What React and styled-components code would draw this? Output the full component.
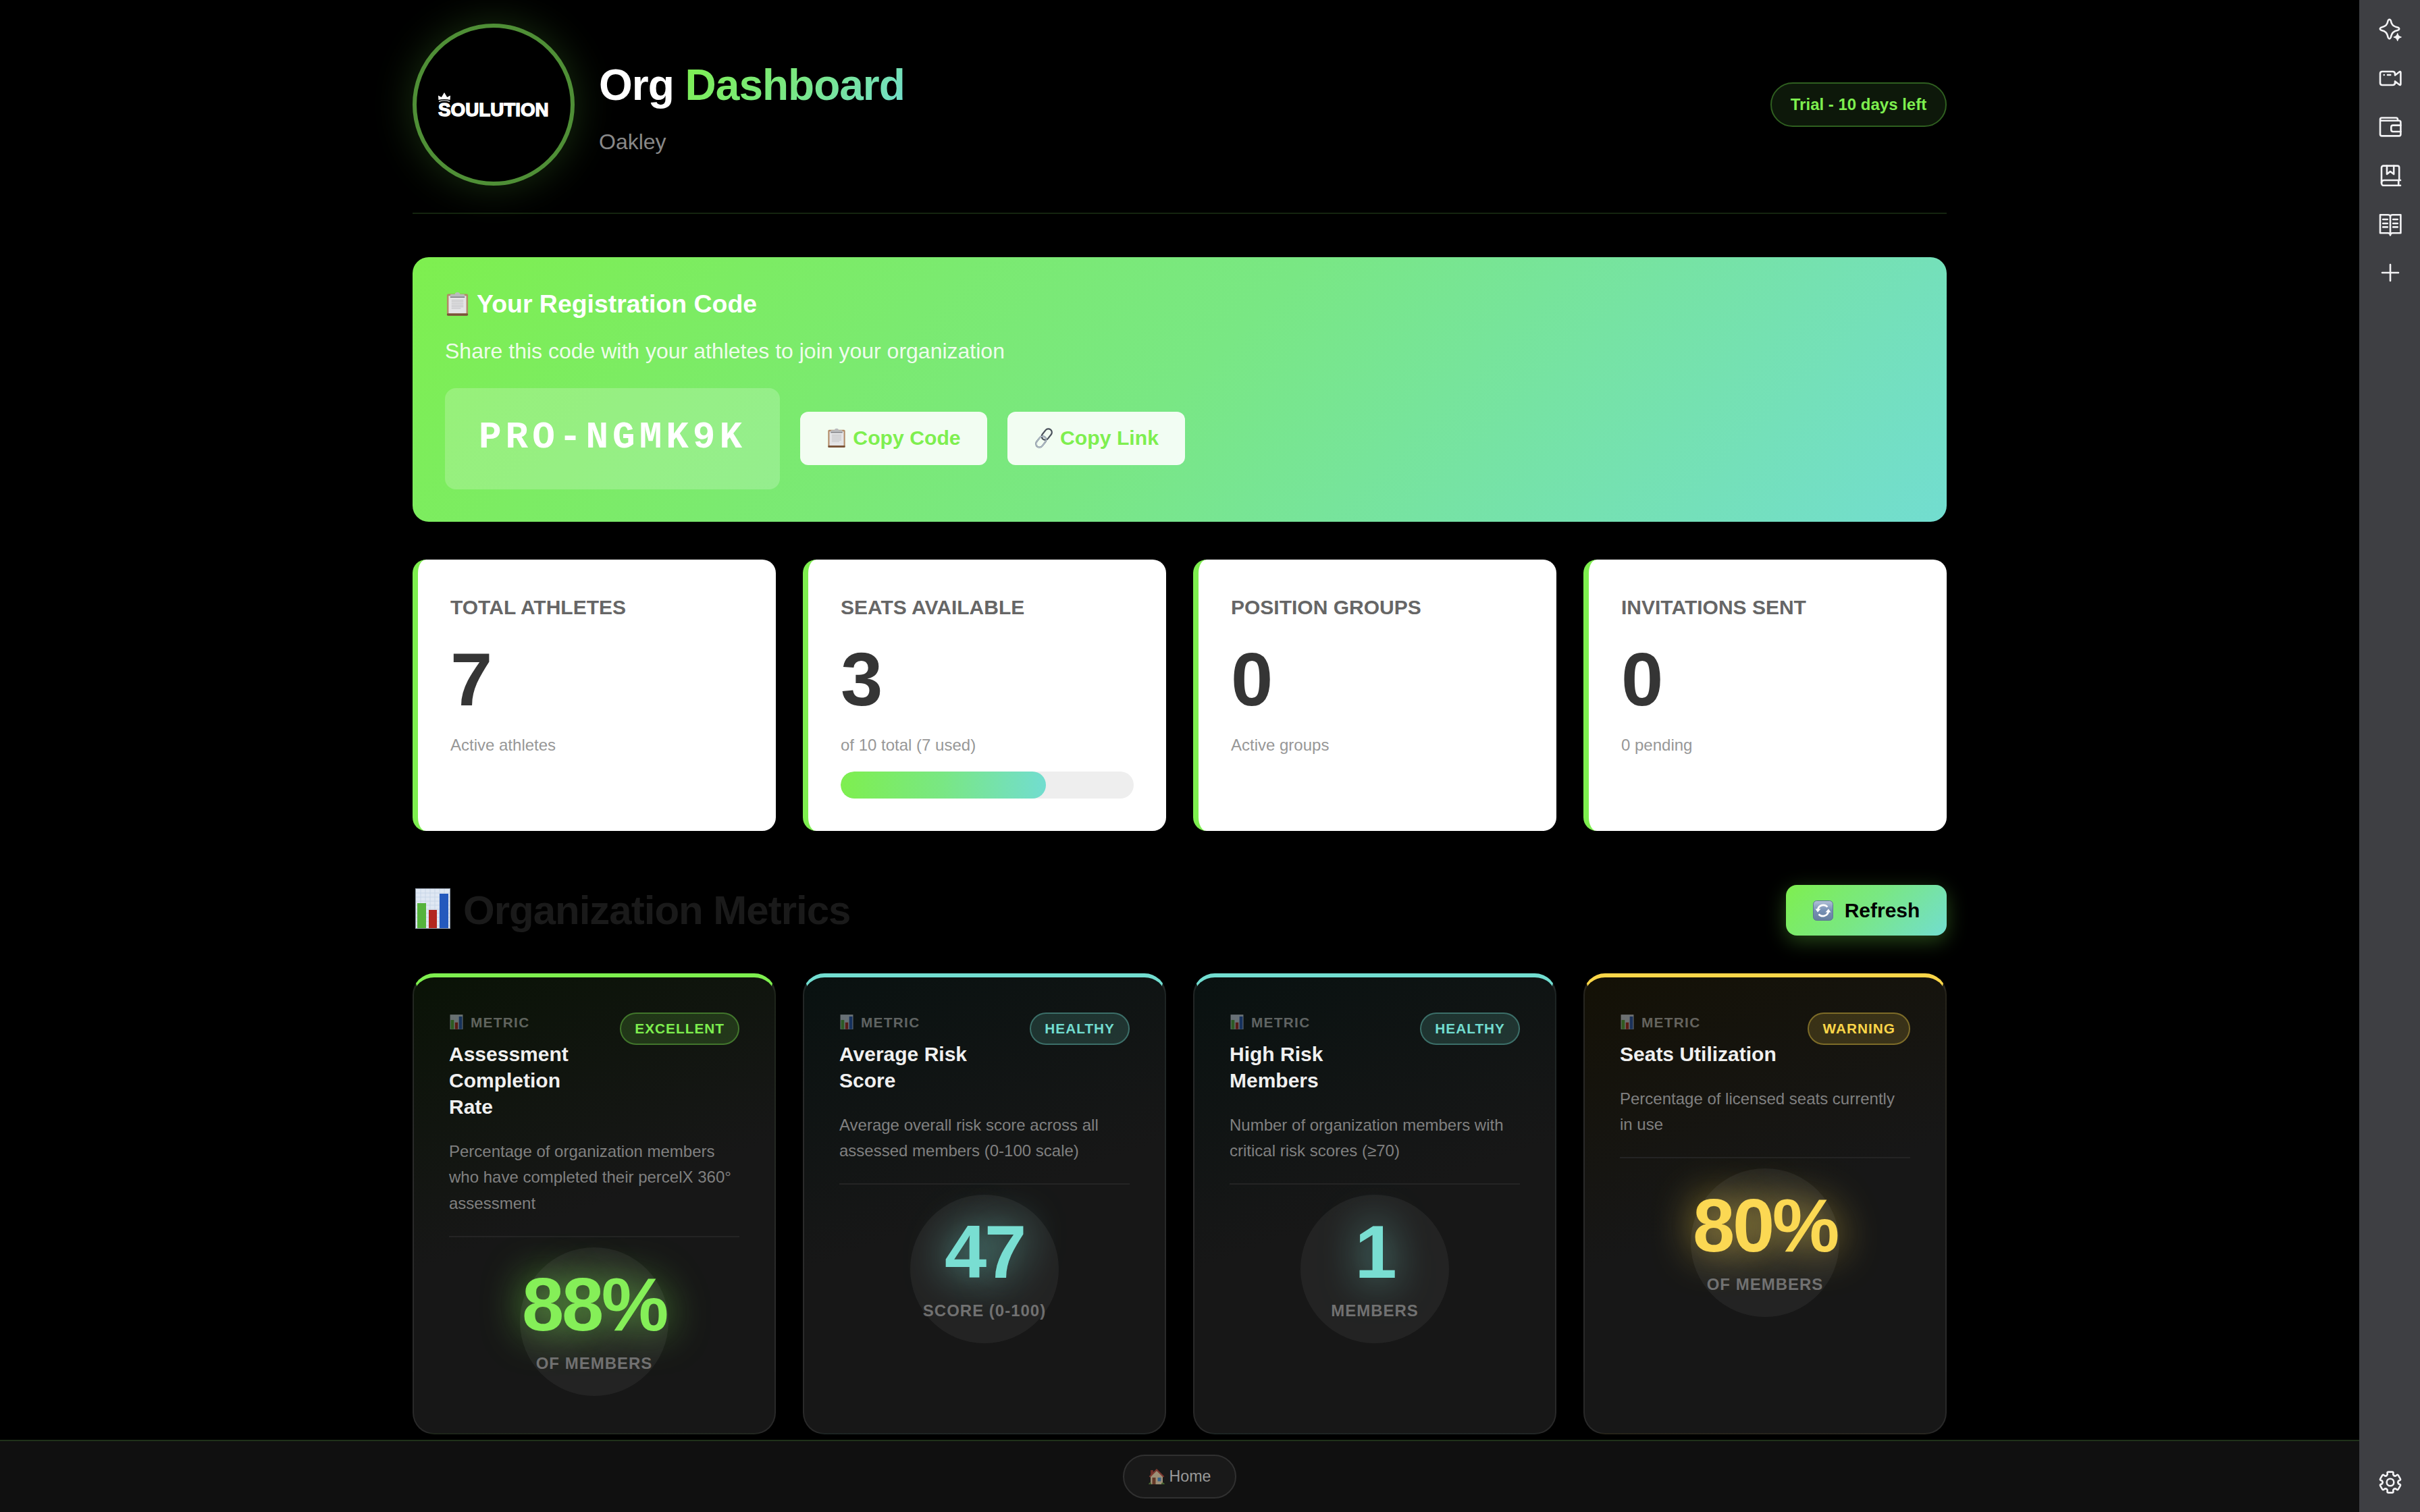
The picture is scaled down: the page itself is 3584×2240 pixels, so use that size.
import styled, { createGlobalStyle } from "styled-components"

const GREEN = "#7eef4f"
const MID = "#79e784"
const TEAL = "#72ddd0"
const YELLOW = "#fbd649"

const tones = {
    green: { color: GREEN, rgb: "126, 239, 79" },
    teal: { color: TEAL, rgb: "114, 221, 208" },
    yellow: { color: YELLOW, rgb: "251, 214, 73" },
}

const GlobalStyle = createGlobalStyle`
    * {
        box-sizing: border-box;
    }
    body {
        margin: 0;
        background: #000;
        font-family: "Liberation Sans", Arial, sans-serif;
    }
    h1, h2, h3, h4, p {
        margin: 0;
    }
    button {
        font-family: inherit;
        cursor: pointer;
    }
    svg {
        display: block;
        flex-shrink: 0;
    }
`

const Page = styled.div`
    display: flex;
    height: 2240px;
    overflow: hidden;
`

const Main = styled.div`
    flex: 1;
    min-width: 0;
    display: flex;
    flex-direction: column;
`

const Content = styled.main`
    flex: 1;
    min-height: 0;
    width: 2400px;
    margin: 0 auto;
    padding: 35px 64px 0;
    overflow: hidden;
`

/* header */

const Header = styled.header`
    display: flex;
    align-items: center;
    gap: 36px;
    padding-bottom: 40px;
    border-bottom: 2px solid #14240f;
    margin-bottom: 64px;
`

const LogoCircle = styled.div`
    width: 240px;
    height: 240px;
    display: flex;
    flex-direction: column;
    justify-content: center;
    padding: 2px 0 0 32px;
    border: 6px solid #4f8f36;
    border-radius: 50%;
    background: #000;
    box-shadow: 0 0 60px rgba(126, 239, 79, 0.2);
`

const LogoText = styled.div`
    font-family: "Liberation Sans", sans-serif;
    font-size: 27.8px;
    line-height: 24px;
    font-weight: 700;
    color: #fff;
    -webkit-text-stroke: 1.4px #fff;
`

const HeaderText = styled.div`
    flex: 1;
    padding-top: 10px;
`

const Title = styled.h1`
    font-size: 64px;
    line-height: 72px;
    letter-spacing: -1px;
    color: #fff;
    margin-bottom: 28px;
`

const TitleAccent = styled.span`
    background: linear-gradient(135deg, ${GREEN}, ${MID}, ${TEAL});
    background-clip: text;
    -webkit-background-clip: text;
    color: transparent;
`

const OrgName = styled.p`
    font-size: 32px;
    line-height: 40px;
    color: #888;
`

const TrialBadge = styled.div`
    height: 66px;
    width: 261px;
    display: flex;
    align-items: center;
    justify-content: center;
    border: 2px solid #2f5f20;
    border-radius: 40px;
    background: #0d180a;
    color: ${GREEN};
    font-size: 24px;
    font-weight: 700;
`

/* registration code */

const CodeCard = styled.section`
    height: 392px;
    padding: 48px;
    border-radius: 24px;
    background: linear-gradient(135deg, ${GREEN} 0%, ${MID} 50%, ${TEAL} 100%);
    color: #fff;
`

const CodeTitle = styled.h3`
    display: flex;
    align-items: center;
    gap: 10px;
    font-size: 37.44px;
    line-height: 42px;
    margin-bottom: 30px;
`

const CodeText = styled.p`
    font-size: 32px;
    line-height: 38px;
    margin-bottom: 36px;
    color: rgba(255, 255, 255, 0.9);
`

const CodeRow = styled.div`
    display: flex;
    align-items: center;
    gap: 30px;
`

const CodeBox = styled.div`
    width: 496px;
    height: 150px;
    padding: 0 50px;
    border-radius: 16px;
    background: rgba(255, 255, 255, 0.2);
    font-family: "Courier New", "Liberation Mono", monospace;
    font-size: 56px;
    line-height: 147px;
    font-weight: 700;
    letter-spacing: 6px;
    white-space: nowrap;
`

const CopyButton = styled.button`
    width: ${({ $width }) => $width}px;
    height: 79px;
    display: flex;
    align-items: center;
    justify-content: center;
    gap: 9px;
    margin-bottom: 2px;
    padding: 0;
    border: 0;
    border-radius: 12px;
    background: rgba(255, 255, 255, 0.9);
    color: ${GREEN};
    font-size: 30.2px;
    font-weight: 700;
`

/* stat cards */

const CardGrid = styled.div`
    display: grid;
    grid-template-columns: repeat(4, 1fr);
    gap: 40px;
    margin-top: 56px;
`

const StatCard = styled.div`
    height: 402px;
    padding: 48px;
    border-left: 8px solid ${GREEN};
    border-radius: 20px;
    background: #fff;
`

const StatLabel = styled.h4`
    font-size: 30px;
    line-height: 46px;
    color: #666;
    text-transform: uppercase;
`

const StatValue = styled.div`
    margin-top: 28px;
    font-size: 112px;
    line-height: 112px;
    font-weight: 700;
    color: #353535;
`

const StatNote = styled.p`
    margin-top: 23px;
    font-size: 24px;
    line-height: 36px;
    color: #979797;
`

const Track = styled.div`
    height: 40px;
    margin-top: 21px;
    border-radius: 20px;
    background: #eee;
    overflow: hidden;
`

const Fill = styled.div`
    height: 100%;
    border-radius: 20px;
    background: linear-gradient(90deg, ${GREEN}, ${MID}, ${TEAL});
`

/* metrics */

const SectionHeader = styled.div`
    display: flex;
    align-items: center;
    justify-content: space-between;
    height: 75px;
    margin-top: 80px;
`

const SectionTitle = styled.h2`
    display: flex;
    align-items: center;
    gap: 15px;
    font-size: 60px;
    letter-spacing: -1px;
    color: #1a1a1a;

    svg {
        margin-bottom: 5px;
    }
`

const RefreshButton = styled.button`
    width: 238px;
    height: 75px;
    display: flex;
    align-items: center;
    justify-content: center;
    gap: 17px;
    padding: 0;
    border: 0;
    border-radius: 16px;
    background: linear-gradient(135deg, ${GREEN}, ${MID}, ${TEAL});
    box-shadow: 0 8px 30px rgba(126, 239, 79, 0.3);
    color: #000;
    font-size: 30px;
    font-weight: 700;
`

const MetricCard = styled.article`
    height: 683px;
    padding: 52px;
    border: 2px solid rgba(255, 255, 255, 0.08);
    border-top: 6px solid ${({ $tone }) => tones[$tone].color};
    border-radius: 32px;
    background: linear-gradient(160deg, rgba(${({ $tone }) => tones[$tone].rgb}, 0.08) 0%, #171717 50%);
`

const MetricHead = styled.div`
    display: flex;
    justify-content: space-between;
    align-items: flex-start;
    gap: 24px;
`

const MetricKind = styled.div`
    display: flex;
    align-items: center;
    gap: 10px;
    margin: 2px 0 14px;
    font-size: 20.8px;
    line-height: 26px;
    font-weight: 700;
    letter-spacing: 1.3px;
    color: rgba(255, 255, 255, 0.35);
    text-transform: uppercase;

    svg {
        opacity: 0.45;
        margin-bottom: 2px;
    }
`

const MetricTitle = styled.h3`
    font-size: 30px;
    line-height: 39px;
    color: #f0f0f0;
`

const StatusBadge = styled.span`
    flex-shrink: 0;
    height: 48px;
    padding: 0 20px;
    border: 2px solid rgba(${({ $tone }) => tones[$tone].rgb}, 0.35);
    border-radius: 24px;
    background: rgba(${({ $tone }) => tones[$tone].rgb}, 0.16);
    color: ${({ $tone }) => tones[$tone].color};
    font-size: 20.8px;
    line-height: 43px;
    font-weight: 700;
    letter-spacing: 1px;
    text-transform: uppercase;
`

const MetricText = styled.p`
    margin: 28px 0 28.4px;
    font-size: 24px;
    line-height: 38.4px;
    color: #808080;
`

const MetricBody = styled.div`
    position: relative;
    padding-top: 44px;
    border-top: 2px solid #242424;
    text-align: center;

    /* faint disc laid over the number */
    &::after {
        content: "";
        position: absolute;
        top: 15px;
        left: calc(50% - 110px);
        width: 220px;
        height: 220px;
        border-radius: 50%;
        background: rgba(255, 255, 255, 0.055);
    }
`

const MetricValue = styled.div`
    font-size: 112px;
    line-height: 112px;
    font-weight: 700;
    letter-spacing: -3.4px;
    color: ${({ $tone }) => tones[$tone].color};
    text-shadow: 0 0 60px rgba(${({ $tone }) => tones[$tone].rgb}, 0.8);
`

const MetricUnit = styled.div`
    margin-top: 13px;
    font-size: 24px;
    line-height: 36px;
    font-weight: 700;
    letter-spacing: 1px;
    color: #696969;
    text-transform: uppercase;
`

/* footer and side rail */

const Footer = styled.footer`
    height: 107px;
    display: flex;
    align-items: flex-start;
    justify-content: center;
    padding-top: 20px;
    border-top: 2px solid #20321a;
    background: #101010;
`

const HomeLink = styled.a`
    width: 168px;
    height: 65px;
    display: flex;
    align-items: center;
    justify-content: center;
    gap: 7px;
    border: 2px solid #303030;
    border-radius: 40px;
    background: #191919;
    color: #999;
    font-size: 23.2px;

    svg {
        opacity: 0.65;
    }
`

const Rail = styled.aside`
    width: 90px;
    display: flex;
    flex-direction: column;
    align-items: center;
    gap: 36px;
    padding: 26px 0 26px 2px;
    background: #3e3f43;
    color: #f2f2f4;
`

const RailSpacer = styled.div`
    flex: 1;
`

const RailIcon = ({ children }) => (
    <svg width="36" height="36" viewBox="0 0 36 36" fill="none" stroke="currentColor" strokeWidth="2.6" strokeLinecap="round" strokeLinejoin="round" overflow="visible">
        {children}
    </svg>
)

const polar = (r, deg) => {
    const a = ((deg - 90) * Math.PI) / 180
    return `${(18 + r * Math.cos(a)).toFixed(2)} ${(18 + r * Math.sin(a)).toFixed(2)}`
}

const gearPath = [0, 60, 120, 180, 240, 300]
    .map((d, i) => `${i ? "L" : "M"}${polar(14.6, d - 18)}Q${polar(16, d - 16)} ${polar(15.6, d - 10)}L${polar(15.6, d + 10)}Q${polar(16, d + 16)} ${polar(14.6, d + 18)}Q${polar(11.5, d + 19)} ${polar(11.8, d + 25)}Q${polar(10.6, d + 30)} ${polar(11.8, d + 35)}Q${polar(11.5, d + 41)} ${polar(14.6, d + 42)}`)
    .join("") + "Z"

const Crown = () => (
    <svg width="18" height="14" viewBox="0 0 18 14" fill="#fff">
        <path d="M0 4.500 L4.800 7 L9 0 L13.200 7 L18 4.500 L17.600 11 Q9 9 0.400 11Z" />
        <path d="M1 13.400 Q9 10.600 17 13.400" fill="none" stroke="#fff" strokeWidth="1.200" />
    </svg>
)

const ClipboardEmoji = ({ size }) => (
    <svg width={size} height={size} viewBox="-1 -1 38 38">
        <rect x="2" y="2.6" width="32" height="33" rx="2" fill="#b28a66" />
        <rect x="2" y="32" width="32" height="3.6" rx="1.5" fill="#7a5438" />
        <rect x="4.6" y="5.5" width="26.8" height="26.5" fill="#e4e4e6" />
        <path d="M9 12h18M9 14.500h18M9 17h18M9 19.500h18M9 22h18M9 24.500h14" stroke="#cbcbce" strokeWidth="1.600" />
        <path d="M7 8.2V4.5Q7 3 9 3h5Q14.500 0 18 0t4 3h5q2 0 2 1.500v3.700z" fill="#b9babd" />
        <path d="M7 7.500h22" stroke="#77787c" strokeWidth="1.400" />
    </svg>
)

const LinkEmoji = () => (
    <svg width="30" height="30" viewBox="0 0 30 30" fill="none" strokeWidth="2.2">
        <rect x="14" y="0.500" width="10.500" height="18" rx="5.250" transform="rotate(38 19.250 9.500)" stroke="#4c535d" />
        <rect x="5.500" y="11.500" width="10.500" height="18" rx="5.250" transform="rotate(38 10.750 20.500)" stroke="#66707c" />
        <rect x="5.500" y="11.500" width="10.500" height="18" rx="5.250" transform="rotate(38 10.750 20.500)" stroke="#c6d3e0" strokeWidth="1.100" />
    </svg>
)

const ChartEmoji = ({ width, height }) => (
    <svg width={width} height={height} viewBox="0 0 52 60">
        <rect width="52" height="60" fill="#8e98a6" />
        <rect x="1" y="1" width="50" height="58" fill="#dfe8f3" />
        <path d="M1 7h50M1 13h50M1 19h50M1 25h50M1 31h50M1 37h50M1 43h50M1 49h50M1 55h50M8 1v58M15 1v58M22 1v58M29 1v58M36 1v58M43 1v58" stroke="#c3d2e4" strokeWidth="0.8" />
        <rect x="3" y="22" width="13" height="37" fill="#55b33c" />
        <rect x="20" y="32" width="12" height="27" fill="#b3271f" />
        <rect x="36" y="8" width="13" height="51" fill="#2459bd" />
    </svg>
)

const RefreshEmoji = () => (
    <svg width="30" height="30" viewBox="0 0 30 30">
        <defs>
            <linearGradient id="refresh-bg" x1="0" y1="0" x2="0" y2="1">
                <stop offset="0" stopColor="#b3c3d8" />
                <stop offset="0.5" stopColor="#7690b5" />
                <stop offset="1" stopColor="#667f9f" />
            </linearGradient>
        </defs>
        <rect x="0.5" y="0.5" width="29" height="29" rx="5" fill="url(#refresh-bg)" stroke="#5d7593" />
        <path d="M7.200 13.200A8.300 8.300 0 0 1 21.500 9.700M22.800 16.800A8.300 8.300 0 0 1 8.500 20.300" fill="none" stroke="#fff" strokeWidth="2.700" />
        <path d="M3.500 12.500h8l-4.500 5zM26.500 17.500h-8l4.500-5z" fill="#fff" />
    </svg>
)

const HouseEmoji = () => (
    <svg width="24" height="24" viewBox="0 0 24 24">
        <rect x="3" y="2" width="4" height="8" fill="#a33b30" />
        <path d="M3 11L12 2.500L21 11V23H3z" fill="#e5cfa9" />
        <path d="M1.500 12L12 1.500L22.500 12" fill="none" stroke="#b3483c" strokeWidth="2.200" />
        <rect x="5.500" y="13" width="5" height="10" fill="#8c4a2f" />
        <rect x="13.500" y="13" width="5" height="5.500" fill="#4d8bc4" />
        <path d="M0 23q1-4 4-2v2zM24 23q-1-4-5-2v2z" fill="#5b8a3a" />
    </svg>
)

const stats = [
    { label: "Total Athletes", value: 7, note: "Active athletes" },
    { label: "Seats Available", value: 3, note: "of 10 total (7 used)", used: 70 },
    { label: "Position Groups", value: 0, note: "Active groups" },
    { label: "Invitations Sent", value: 0, note: "0 pending" },
]

const metrics = [
    {
        title: "Assessment Completion Rate",
        status: "Excellent",
        tone: "green",
        text: "Percentage of organization members who have completed their percelX 360° assessment",
        value: "88%",
        unit: "of members",
    },
    {
        title: "Average Risk Score",
        status: "Healthy",
        tone: "teal",
        text: "Average overall risk score across all assessed members (0-100 scale)",
        value: "47",
        unit: "score (0-100)",
    },
    {
        title: "High Risk Members",
        status: "Healthy",
        tone: "teal",
        text: "Number of organization members with critical risk scores (≥70)",
        value: "1",
        unit: "members",
    },
    {
        title: "Seats Utilization",
        status: "Warning",
        tone: "yellow",
        text: "Percentage of licensed seats currently in use",
        value: "80%",
        unit: "of members",
    },
]

const SideRail = () => (
    <Rail>
        <RailIcon>
            <path d="M14.700 4.500Q16.700 0.900 18.700 4.500C20 11 22 13 29.500 14.700Q33 16.700 29.500 18.700C22 20.400 20.500 22.500 18.700 29.500Q16.700 33.400 14.700 29.500C13 22.500 11.400 20.400 4.500 18.700Q1 16.700 4.500 14.700C11.400 13 13.400 11 14.700 4.500Z" />
            <circle cx="28.700" cy="29" r="6" fill="#3e3f43" stroke="none" />
            <path d="M28.700 23.800Q29.500 28.200 34 29Q29.500 29.800 28.700 34.200Q27.900 29.800 23.400 29Q27.900 28.200 28.700 23.800Z" fill="currentColor" strokeWidth="1.400" />
        </RailIcon>
        <RailIcon>
            <path d="M6 8H21.500Q25 8 25 11.500V13.500L31.500 8.500Q33.400 7.500 33.400 9.500V26.500Q33.400 28.500 31.500 27.500L25 22.500V24.500Q25 28 21.500 28H6Q3 28 3 25V11Q3 8 6 8Z" />
            <path d="M8.700 13H8.800M14 13H18.200" />
        </RailIcon>
        <RailIcon>
            <path d="M3 7V29Q3 31.400 5.500 31.400H31Q33.400 31.400 33.400 29V11.200Q33.400 8.800 31 8.800H5Q3 8.800 3 6.800Q3 4.500 5.500 4.500H26.500Q29 4.500 29 7V8.800" />
            <path d="M33.400 15.600H22Q19.300 15.600 19.300 18.300V22.300Q19.300 25 22 25H33.400" />
        </RailIcon>
        <RailIcon>
            <path d="M5 29V6.500Q5 3.600 8 3.600H28.500Q31.200 3.600 31.200 6.300V25" />
            <path d="M33 25H9Q5 25 5 29T9 32.800H33M30.200 25V32.800" />
            <path d="M13 3.600V16L18 12L23.200 16V3.600" />
        </RailIcon>
        <RailIcon>
            <path d="M18 7Q18 4.300 14.500 4.300H3V31.200H14.500Q18 31.200 18 34.500Q18 31.200 21.500 31.200H33.400V4.300H21.500Q18 4.300 18 7V34.500" />
            <path d="M7.200 11H13.800M7.200 17H13.800M7.200 22.400H13.800M22.200 11H28.800M22.200 17H28.800M22.200 22.400H28.800" />
        </RailIcon>
        <RailIcon>
            <path d="M18 6V30M6 18H30" />
        </RailIcon>
        <RailSpacer />
        <RailIcon>
            <path d={gearPath} />
            <circle cx="18" cy="18" r="5.300" />
        </RailIcon>
    </Rail>
)

const App = () => {
    return (<>
        <GlobalStyle />
        <Page>
            <Main>
                <Content>
                    <Header>
                        <LogoCircle>
                            <Crown />
                            <LogoText>SOULUTION</LogoText>
                        </LogoCircle>
                        <HeaderText>
                            <Title>Org <TitleAccent>Dashboard</TitleAccent></Title>
                            <OrgName>Oakley</OrgName>
                        </HeaderText>
                        <TrialBadge>Trial - 10 days left</TrialBadge>
                    </Header>

                    <CodeCard>
                        <CodeTitle><ClipboardEmoji size={37} /> Your Registration Code</CodeTitle>
                        <CodeText>Share this code with your athletes to join your organization</CodeText>
                        <CodeRow>
                            <CodeBox>PRO-NGMK9K</CodeBox>
                            <CopyButton $width={277}><ClipboardEmoji size={30} />Copy Code</CopyButton>
                            <CopyButton $width={263}><LinkEmoji />Copy Link</CopyButton>
                        </CodeRow>
                    </CodeCard>

                    <CardGrid>
                        {stats.map((stat) => (
                            <StatCard key={stat.label}>
                                <StatLabel>{stat.label}</StatLabel>
                                <StatValue>{stat.value}</StatValue>
                                <StatNote>{stat.note}</StatNote>
                                {stat.used && <Track><Fill style={{ width: `${stat.used}%` }} /></Track>}
                            </StatCard>
                        ))}
                    </CardGrid>

                    <SectionHeader>
                        <SectionTitle><ChartEmoji width={60} height={60} />Organization Metrics</SectionTitle>
                        <RefreshButton><RefreshEmoji />Refresh</RefreshButton>
                    </SectionHeader>

                    <CardGrid>
                        {metrics.map((metric) => (
                            <MetricCard key={metric.title} $tone={metric.tone}>
                                <MetricHead>
                                    <div>
                                        <MetricKind><ChartEmoji width={22} height={22} />Metric</MetricKind>
                                        <MetricTitle>{metric.title}</MetricTitle>
                                    </div>
                                    <StatusBadge $tone={metric.tone}>{metric.status}</StatusBadge>
                                </MetricHead>
                                <MetricText>{metric.text}</MetricText>
                                <MetricBody>
                                    <MetricValue $tone={metric.tone}>{metric.value}</MetricValue>
                                    <MetricUnit>{metric.unit}</MetricUnit>
                                </MetricBody>
                            </MetricCard>
                        ))}
                    </CardGrid>
                </Content>
                <Footer>
                    <HomeLink><HouseEmoji />Home</HomeLink>
                </Footer>
            </Main>
            <SideRail />
        </Page>
    </>)
}

export default App
